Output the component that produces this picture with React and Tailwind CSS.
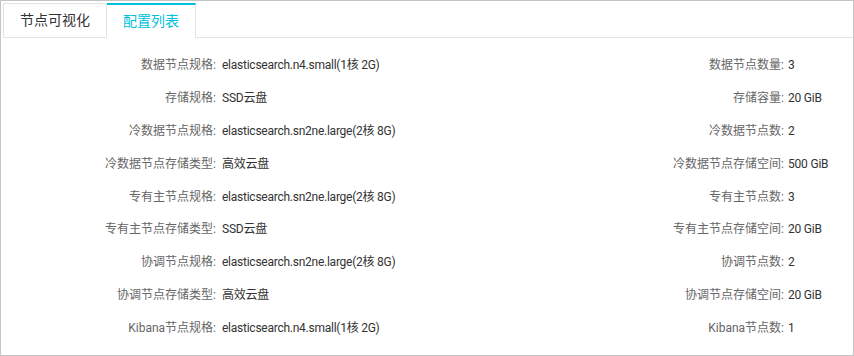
import React from 'react';

const ROWS = [
  ['数据节点规格', 'elasticsearch.n4.small(1核 2G)', '数据节点数量', '3'],
  ['存储规格', 'SSD云盘', '存储容量', '20 GiB'],
  ['冷数据节点规格', 'elasticsearch.sn2ne.large(2核 8G)', '冷数据节点数', '2'],
  ['冷数据节点存储类型', '高效云盘', '冷数据节点存储空间', '500 GiB'],
  ['专有主节点规格', 'elasticsearch.sn2ne.large(2核 8G)', '专有主节点数', '3'],
  ['专有主节点存储类型', 'SSD云盘', '专有主节点存储空间', '20 GiB'],
  ['协调节点规格', 'elasticsearch.sn2ne.large(2核 8G)', '协调节点数', '2'],
  ['协调节点存储类型', '高效云盘', '协调节点存储空间', '20 GiB'],
  ['Kibana节点规格', 'elasticsearch.n4.small(1核 2G)', 'Kibana节点数', '1'],
];

const font = { fontFamily: 'Roboto, "Noto Sans CJK SC", sans-serif' };

export default function App() {
  return (
    <div
      className="w-[854px] h-[356px] bg-white border border-[#c4c4c4] overflow-hidden"
      style={font}
    >
      {/* Tabs */}
      <div className="flex pl-[2px] pt-[2px]">
        <div className="w-[104px] h-[35px] flex items-center justify-center border border-[#e2e2e2] text-[14px] text-[#333]">
          节点可视化
        </div>
        <div className="w-[89px] h-[35px] flex items-center justify-center border-t-2 border-t-[#00c1de] border-r border-r-[#e2e2e2] text-[14px] text-[#00c1de]">
          配置列表
        </div>
        <div className="flex-1 h-[35px] border-b border-[#e2e2e2]" />
      </div>

      {/* Config list */}
      <div className="pt-[11px]">
        {ROWS.map(([l1, v1, l2, v2]) => (
          <div key={l1} className="flex h-[32.8px] items-center text-[12px]">
            <div className="flex w-[426px]">
              <span className="w-[219px] text-right text-[#666] pr-[4px]">{l1}:</span>
              <span className="ml-[2px] text-[#333] tracking-[-0.25px]">{v1}</span>
            </div>
            <div className="flex">
              <span className="w-[360px] text-right text-[#666] pr-[3px]">{l2}:</span>
              <span className="ml-[1px] text-[#333] tracking-[-0.2px]">{v2}</span>
            </div>
          </div>
        ))}
      </div>
    </div>
  );
}
